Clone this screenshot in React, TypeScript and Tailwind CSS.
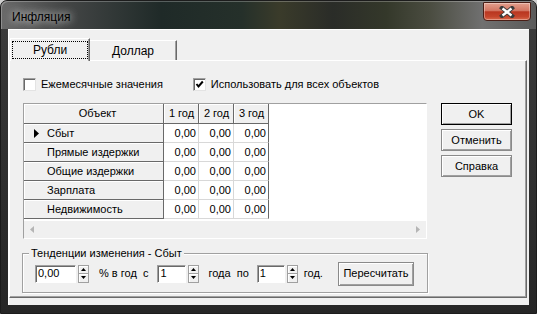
import React from "react";

function Check({ checked }: { checked?: boolean }) {
  return (
    <div className="w-[13px] h-[13px] bg-white border border-t-[#a0a0a0] border-l-[#a0a0a0] border-r-[#e3e3e3] border-b-[#e3e3e3] shadow-[inset_1px_1px_0_#696969] flex items-center justify-center">
      {checked && (
        <svg width="9" height="9" viewBox="0 0 9 9">
          <polyline points="1.5,4 3.5,6.5 7.8,1.5" fill="none" stroke="#000" strokeWidth="2" />
        </svg>
      )}
    </div>
  );
}

function Spin() {
  return (
    <div className="flex flex-col w-[11px] h-[18px] border border-[#a0a0a0]">
      <div className="flex-1 bg-[#f0f0f0] border-b border-[#a0a0a0] shadow-[inset_1px_1px_0_#fff] flex items-center justify-center">
        <svg width="5" height="3" viewBox="0 0 5 3">
          <path d="M2.5 0 L5 3 L0 3 Z" fill="#000" />
        </svg>
      </div>
      <div className="flex-1 bg-[#f0f0f0] shadow-[inset_1px_1px_0_#fff] flex items-center justify-center">
        <svg width="5" height="3" viewBox="0 0 5 3">
          <path d="M0 0 L5 0 L2.5 3 Z" fill="#000" />
        </svg>
      </div>
    </div>
  );
}

function Edit({ value, w }: { value: string; w: string }) {
  return (
    <div
      className={`${w} h-[18px] bg-white border border-t-[#a0a0a0] border-l-[#a0a0a0] border-r-white border-b-white shadow-[inset_1px_1px_0_#696969] flex items-center pl-[2px] text-[11px]`}
    >
      {value}
    </div>
  );
}

function Btn({ label, def }: { label: string; def?: boolean }) {
  return (
    <div
      className={`w-[71px] h-[22px] ${def ? "border border-[#000]" : "border border-[#8a8a8a]"} bg-[#f0f0f0] flex items-center justify-center text-[11px]`}
    >
      <div className="w-full h-full flex items-center justify-center shadow-[inset_1px_1px_0_#fff,inset_-1px_-1px_0_#a0a0a0]">
        {label}
      </div>
    </div>
  );
}

const rows = ["Сбыт", "Прямые издержки", "Общие издержки", "Зарплата", "Недвижимость"];

export default function App() {
  return (
    <div className="w-[537px] h-[314px] overflow-hidden bg-[#cfcfcf] font-['Liberation_Sans',Arial,sans-serif] text-black">
      <div className="w-full h-full rounded-t-[7px] border border-[#1c1c1c] bg-[linear-gradient(180deg,#3c3c3c,#262626)] flex flex-col">
        {/* title bar */}
        <div className="h-[28px] flex items-start justify-between rounded-t-[6px] bg-[linear-gradient(90deg,#6a6a6a_0%,#444646_12%,#1f2a28_30%,#25302a_45%,#3a3b2a_52%,#2a2c28_62%,#34382a_72%,#4a4c40_80%,#707070_90%,#5a5a5a_100%)] shadow-[inset_1px_1px_0_rgba(255,255,255,0.25)]">
          <div className="mt-[7px] ml-[9px] px-[2px] text-[12px] text-black [text-shadow:0_0_8px_rgba(255,255,255,0.75),0_0_10px_rgba(255,255,255,0.5)]">
            Инфляция
          </div>
          <div className="mt-[1px] mr-[5px] w-[48px] h-[19px] rounded-b-[4px] rounded-t-[1px] border border-[#4a1e16] bg-[linear-gradient(180deg,#e3a08e_0%,#d27561_45%,#b93620_52%,#c4452c_80%,#d96a4c_100%)] shadow-[inset_0_0_0_1px_rgba(255,255,255,0.35)] flex items-center justify-center">
            <svg width="16" height="12" viewBox="0 0 16 12">
              <path d="M3 2 L13 10 M13 2 L3 10" stroke="#3b3b3b" strokeWidth="4.2" strokeLinecap="square" />
              <path d="M3.5 2.5 L12.5 9.5 M12.5 2.5 L3.5 9.5" stroke="#fff" strokeWidth="2.4" />
            </svg>
          </div>
        </div>
        {/* middle */}
        <div className="flex-1 flex px-[7px]">
          <div className="flex-1 bg-[#f0f0f0] border-t border-l border-white pt-[8px] pr-[2px] pb-[7px] flex flex-col">
            {/* tabs */}
            <div className="flex items-end h-[22px] pl-[1px] relative z-10">
              <div className="w-[80px] h-[23px] -mb-[1px] bg-[#f0f0f0] border-t border-l border-white border-r border-r-[#696969] shadow-[inset_-1px_0_0_#a0a0a0] flex items-center justify-center">
                <div className="w-[76px] h-[18px] border border-dotted border-black flex items-center justify-center text-[12px]">
                  Рубли
                </div>
              </div>
              <div className="w-[87px] h-[20px] bg-[#f0f0f0] border-t border-white border-r border-r-[#696969] shadow-[inset_-1px_0_0_#a0a0a0] flex items-center justify-center text-[12px] pt-[1px]">
                Доллар
              </div>
            </div>
            {/* panel */}
            <div className="flex-1 border-t border-l border-white border-r border-r-[#696969] border-b border-b-[#696969] shadow-[inset_-1px_-1px_0_#a0a0a0] pl-[13px] pt-[17px] flex flex-col text-[11px]">
              <div className="flex items-center h-[13px]">
                <Check />
                <span className="ml-[5px]">Ежемесячные значения</span>
                <div className="ml-[30px]">
                  <Check checked />
                </div>
                <span className="ml-[5px]">Использовать для всех объектов</span>
              </div>
              <div className="flex mt-[12px]">
                {/* grid */}
                <div className="w-[404px] h-[136px] border border-t-[#a0a0a0] border-l-[#a0a0a0] border-r-white border-b-white bg-white flex flex-col">
                  <div className="flex-1 flex">
                    <div className="grid grid-cols-[140px_35px_35px_35px] grid-rows-[20px_repeat(5,19px)]">
                      <div className="bg-[#f0f0f0] border-r border-b border-[#696969] shadow-[inset_1px_1px_0_#fff] flex items-center justify-center pl-[8px]">
                        Объект
                      </div>
                      {["1 год", "2 год", "3 год"].map((h) => (
                        <div
                          key={h}
                          className="bg-[#f0f0f0] border-r border-b border-[#696969] shadow-[inset_1px_1px_0_#fff] flex items-center justify-center pl-[1px]"
                        >
                          {h}
                        </div>
                      ))}
                      {rows.map((r, i) => (
                        <React.Fragment key={r}>
                          <div className="bg-[#f0f0f0] border-r border-b border-[#696969] shadow-[inset_1px_1px_0_#fff] flex items-center">
                            <div className="w-[23px] flex items-center justify-end pr-[8px]">
                              {i === 0 && (
                                <svg width="5" height="9" viewBox="0 0 5 9">
                                  <path d="M0 0 L5 4.5 L0 9 Z" fill="#000" />
                                </svg>
                              )}
                            </div>
                            <span>{r}</span>
                          </div>
                          <div className="border-r border-b border-[#d8d8d8] flex items-center justify-end pr-[2px]">0,00</div>
                          <div className="border-r border-b border-[#d8d8d8] flex items-center justify-end pr-[2px]">0,00</div>
                          <div className="border-r border-r-[#696969] border-b border-b-[#d8d8d8] flex items-center justify-end pr-[2px]">0,00</div>
                        </React.Fragment>
                      ))}
                    </div>
                  </div>
                  <div className="h-[17px] bg-[#f0f0f0] flex items-center justify-between px-[6px]">
                    <svg width="4" height="7" viewBox="0 0 4 7">
                      <path d="M4 0 L0 3.5 L4 7 Z" fill="#b5b5b5" />
                    </svg>
                    <svg width="4" height="7" viewBox="0 0 4 7">
                      <path d="M0 0 L4 3.5 L0 7 Z" fill="#b5b5b5" />
                    </svg>
                  </div>
                </div>
                {/* buttons */}
                <div className="ml-[14px] flex flex-col gap-[4px]">
                  <Btn label="OK" def />
                  <Btn label="Отменить" />
                  <Btn label="Справка" />
                </div>
              </div>
              {/* group box */}
              <div className="relative mt-[14px] w-[406px] h-[40px] -ml-[1px] border border-[#a0a0a0] shadow-[inset_1px_1px_0_#fff,1px_1px_0_#fff] flex items-center pl-[12px] pt-[1px]">
                <div className="absolute -top-[7px] left-[6px] bg-[#f0f0f0] px-[2px] leading-[13px]">
                  Тенденции изменения - Сбыт
                </div>
                <Edit value="0,00" w="w-[41px]" />
                <div className="ml-[2px]">
                  <Spin />
                </div>
                <span className="ml-[10px] whitespace-pre">% в год  с</span>
                <div className="ml-[9px]">
                  <Edit value="1" w="w-[29px]" />
                </div>
                <div className="ml-[2px]">
                  <Spin />
                </div>
                <span className="ml-[9px] whitespace-pre">года  по</span>
                <div className="ml-[8px]">
                  <Edit value="1" w="w-[28px]" />
                </div>
                <div className="ml-[2px]">
                  <Spin />
                </div>
                <span className="ml-[6px]">год.</span>
                <div className="ml-[15px] w-[76px] h-[24px] border border-[#8a8a8a] bg-[#f0f0f0] shadow-[inset_1px_1px_0_#fff,inset_-1px_-1px_0_#a0a0a0] flex items-center justify-center">
                  Пересчитать
                </div>
              </div>
            </div>
          </div>
        </div>
        <div className="h-[8px]" />
      </div>
    </div>
  );
}
